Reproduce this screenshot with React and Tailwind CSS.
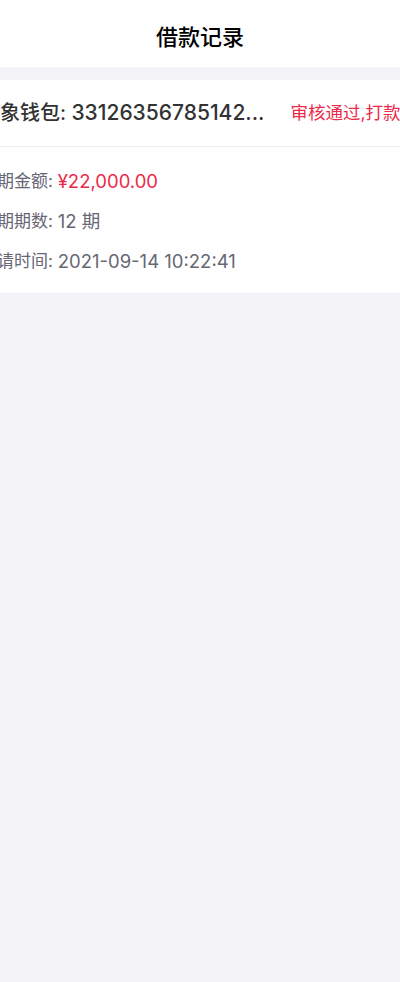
import React from "react";

const DETAILS = [
  { label: "分期金额", value: "¥22,000.00", red: true },
  { label: "分期期数", value: "12 期" },
  { label: "申请时间", value: "2021-09-14 10:22:41" },
];

export default function App() {
  return (
    <div
      className="min-h-[982px] bg-[#f4f4f8] text-[#323233]"
      style={{ fontFamily: '"Inter", "Noto Sans CJK SC", sans-serif' }}
    >
      {/* header */}
      <div className="h-[67px] pt-[7px] bg-white flex items-center justify-center">
        <h1 className="text-[22px] font-medium text-black">借款记录</h1>
      </div>

      {/* record card */}
      <div className="mt-[13px] bg-white overflow-hidden">
        <div className="h-[67px] flex items-center border-b border-[#ebedf0] -ml-[20px] whitespace-nowrap">
          <span className="text-[20px] font-medium text-[#323233]">
            大象钱包: <span className="text-[21px]">33126356785142...</span>
          </span>
          <span className="ml-[26px] text-[17.5px] text-[#ec2a4a]">审核通过,打款中</span>
        </div>
        <div className="pt-[15px] pb-[11px] -ml-[20px] whitespace-nowrap">
          {DETAILS.map((d) => (
            <div key={d.label} className="h-[40px] flex items-center text-[17px] text-[#676774]">
              {d.label}:&nbsp;
              <span className={d.red ? "text-[18.5px] text-[#ec2a4a]" : "text-[18.5px]"}>{d.value}</span>
            </div>
          ))}
        </div>
      </div>
    </div>
  );
}
